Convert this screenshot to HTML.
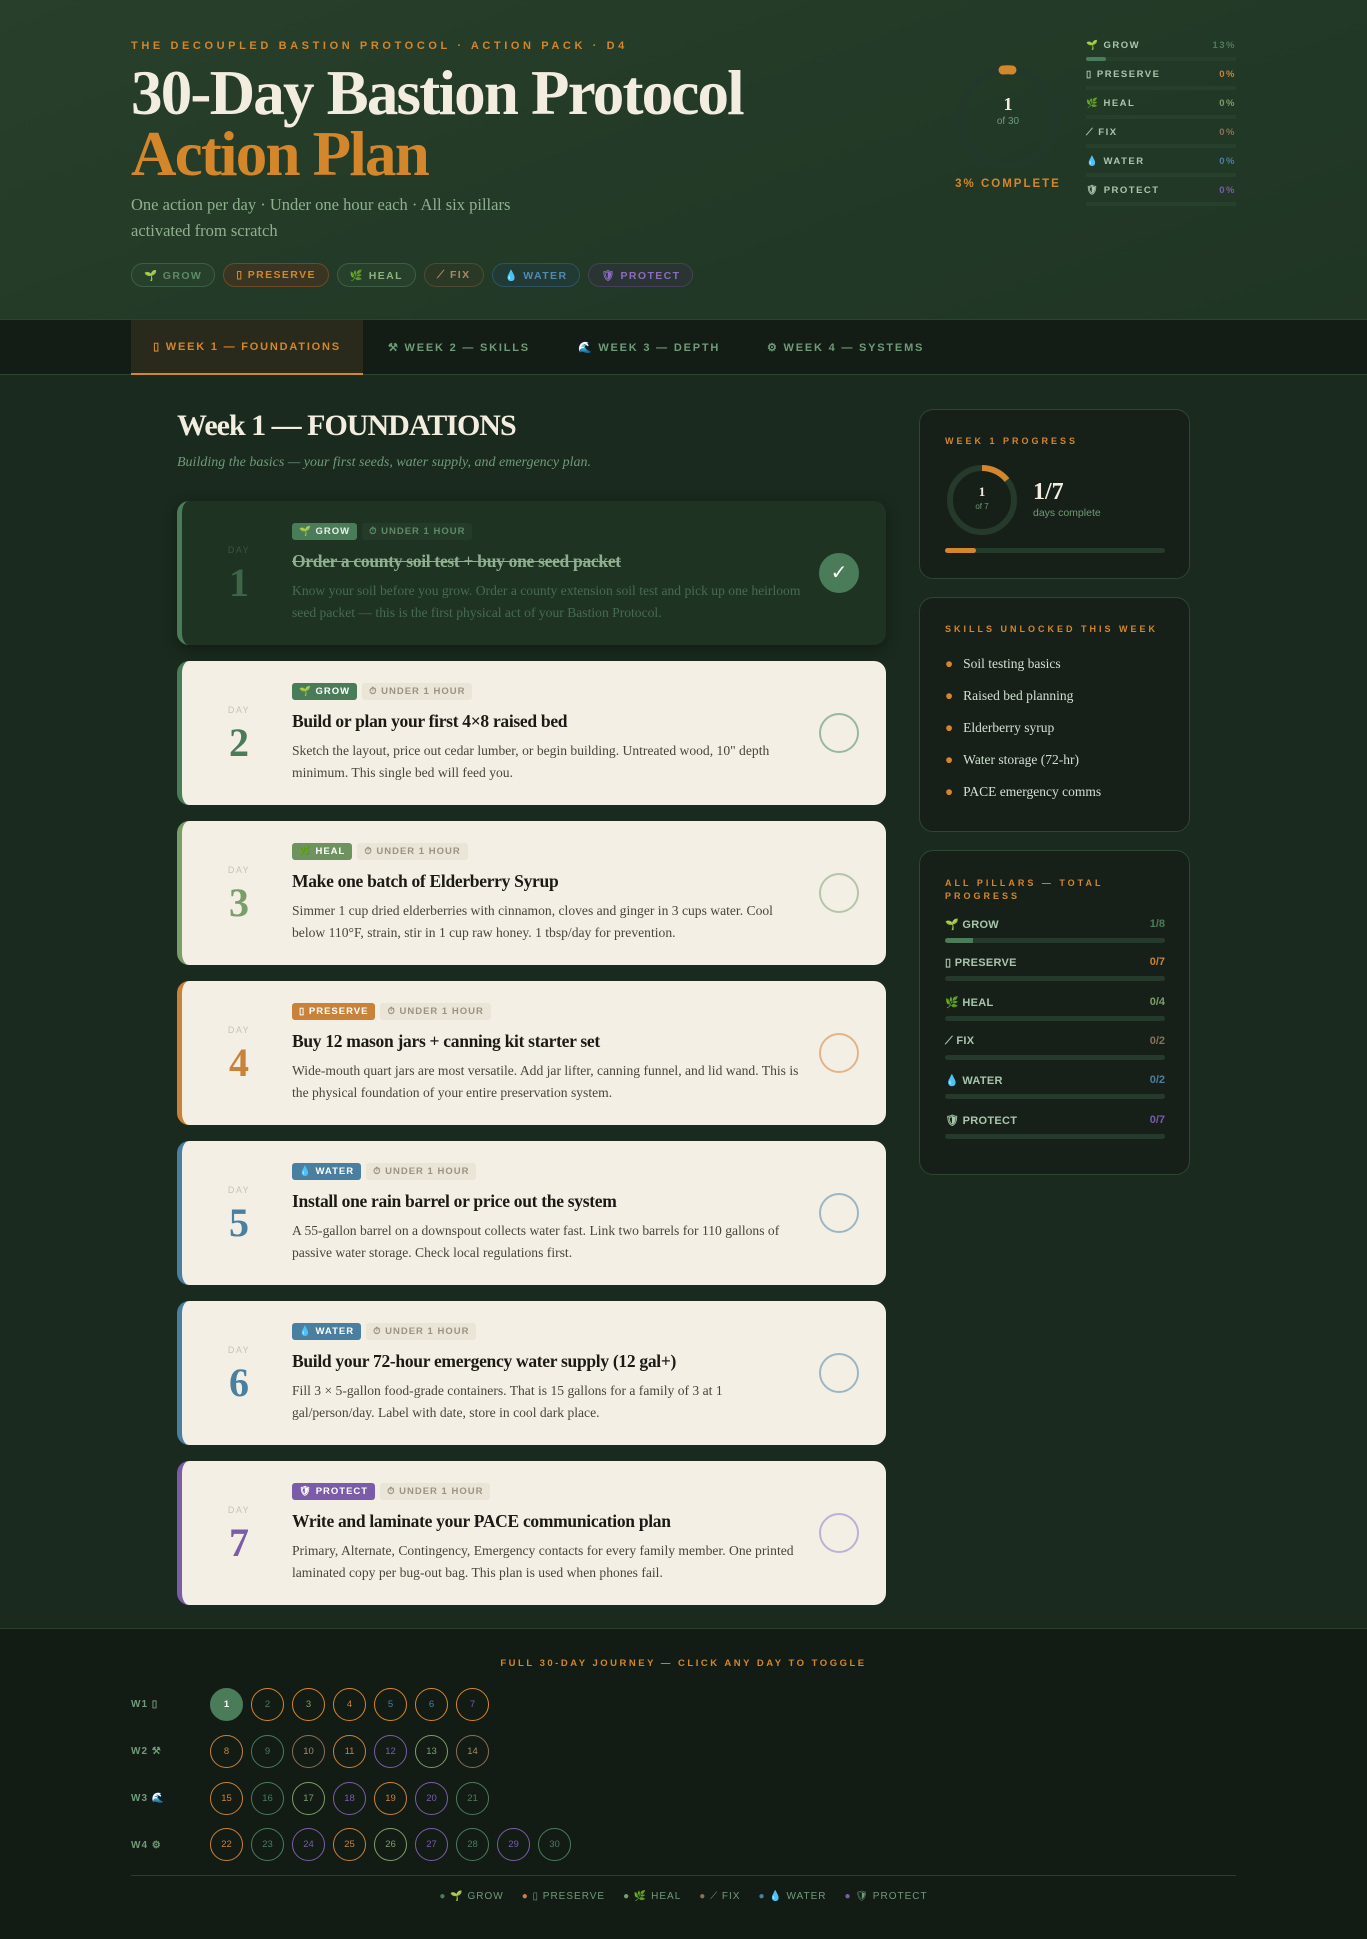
<!DOCTYPE html>
<html><head><meta charset="utf-8">
<style>
*{margin:0;padding:0;box-sizing:border-box}
body{width:1367px;height:1939px;background:#1a2a1e;font-family:"Liberation Sans",sans-serif;position:relative;overflow:hidden}
.abs{position:absolute}
.hdr{left:0;top:0;width:1367px;height:319px;background:linear-gradient(160deg,#273f2b,#203524)}
.eyebrow{left:131px;top:40px;font-size:11px;letter-spacing:3.6px;color:#d4862a;font-weight:bold}
.t1{left:131px;top:60px;font-family:"Liberation Serif",serif;font-weight:bold;font-size:63px;color:#f3ede0;letter-spacing:-1.8px;line-height:66px}
.t2{left:131px;top:121px;font-family:"Liberation Serif",serif;font-weight:bold;font-size:63px;color:#d4862a;letter-spacing:-1.8px;line-height:66px}
.sub{left:131px;top:192px;font-family:"Liberation Serif",serif;font-size:16.5px;color:#8fb08f;line-height:26px;width:420px}
.pills{left:131px;top:263px;display:flex;gap:8px}
.pill{height:24px;border-radius:12px;padding:0 12px;font-size:10.5px;letter-spacing:1.4px;font-weight:bold;display:flex;align-items:center;gap:5px;border:1px solid}
.nav{left:0;top:319px;width:1367px;height:56px;background:#141c16;border-top:1px solid #2c4430;border-bottom:1px solid #2c4430}
.tab{position:absolute;top:0;height:55px;display:flex;align-items:center;font-size:11px;letter-spacing:1.8px;font-weight:bold;color:#6f9a78;gap:10px}
.card{position:absolute;left:177px;width:709px;height:144px;border-radius:12px;background:#f4efe4;border-left:5px solid}
.day{position:absolute;left:42px;top:44px;width:30px;text-align:center;font-size:9px;letter-spacing:1.5px;color:#c9c2b3}
.dnum{position:absolute;left:32px;top:58px;width:50px;text-align:center;font-family:"Liberation Serif",serif;font-weight:bold;font-size:40px}
.tags{position:absolute;left:110px;top:22px;display:flex;gap:5px}
.tag{height:17px;padding:0 7px;border-radius:3px;font-size:9.5px;font-weight:bold;letter-spacing:1px;display:flex;align-items:center;gap:4px}
.tg2{background:#ebe5d8;color:#9a9385}
.ttl{position:absolute;left:110px;top:50px;font-family:"Liberation Serif",serif;font-weight:bold;font-size:17.5px;color:#1c1a16;letter-spacing:-.3px}
.desc{position:absolute;left:110px;top:79px;width:510px;font-family:"Liberation Serif",serif;font-size:13.6px;line-height:22px;color:#4a4538}
.chk{position:absolute;left:637px;top:52px;width:40px;height:40px;border-radius:50%;border:2px solid}
.side{position:absolute;left:919px;width:271px;border:1px solid #2e4632;border-radius:14px;background:#162019}
.sh{font-size:9px;letter-spacing:3px;font-weight:bold;color:#d4862a}
.prow{position:absolute;left:25px;width:220px}
.prow .l{font-size:11px;font-weight:bold;color:#a9c6ad;letter-spacing:.3px}
.prow .r{position:absolute;right:0;top:0;font-size:11px;font-weight:bold}
.bar{height:5px;border-radius:3px;background:#263a2b;margin-top:7px;position:relative;overflow:hidden}
.foot{left:0;top:1628px;width:1367px;height:311px;background:#131b15;border-top:1px solid #2a3d2d}
.c{position:absolute;width:33px;height:33px;border-radius:50%;border:1.5px solid;font-size:9.5px;display:flex;align-items:center;justify-content:center}
.rl{position:absolute;left:131px;font-size:10px;font-weight:bold;color:#6f9a78;letter-spacing:1px}
</style></head><body>

<div class="abs hdr"></div>
<div class="abs eyebrow">THE DECOUPLED BASTION PROTOCOL · ACTION PACK · D4</div>
<div class="abs t1">30-Day Bastion Protocol</div>
<div class="abs t2">Action Plan</div>
<div class="abs sub">One action per day · Under one hour each · All six pillars activated from scratch</div>
<div class="abs pills">
<div class="pill" style="color:#5e8a67;border-color:#3c5e44;background:#26402c">🌱 GROW</div>
<div class="pill" style="color:#d4862a;border-color:#6b4a26;background:#3a3522">▯ PRESERVE</div>
<div class="pill" style="color:#8db07e;border-color:#3c5e44;background:#26402c">🌿 HEAL</div>
<div class="pill" style="color:#a58a6a;border-color:#4e4a34;background:#2c3826">⟋ FIX</div>
<div class="pill" style="color:#4f8ab0;border-color:#2f5260;background:#223a34">💧 WATER</div>
<div class="pill" style="color:#8a6cc0;border-color:#44405a;background:#2a3432">🛡 PROTECT</div>
</div>

<svg class="abs" style="left:948px;top:58px" width="120" height="120"><circle cx="60" cy="60" r="48" fill="none" stroke="#23382a" stroke-width="7"/><path d="M55 12 A48 48 0 0 1 64 12" stroke="#d4862a" stroke-width="9" stroke-linecap="round" fill="none"/></svg>
<div class="abs" style="left:968px;top:94px;width:80px;text-align:center;font-family:'Liberation Serif',serif;font-weight:bold;font-size:18px;color:#f3ede0">1</div>
<div class="abs" style="left:968px;top:116px;width:80px;text-align:center;font-size:10px;color:#6f9a78">of 30</div>
<div class="abs" style="left:948px;top:178px;width:120px;text-align:center;font-size:11.5px;font-weight:bold;letter-spacing:2px;color:#d4862a">3% COMPLETE</div>

<div class="abs" style="left:1086px;top:40px;width:150px;font-size:9.5px;font-weight:bold;letter-spacing:1.5px;color:#a9c6ad">
<div style="position:relative;height:29px">🌱 GROW<span style="position:absolute;right:0;color:#4a7c59">13%</span><div style="position:absolute;left:0;right:0;top:17px;height:4px;background:#26402c;border-radius:2px"><div style="width:13%;height:4px;background:#4a7c59;border-radius:2px"></div></div></div>
<div style="position:relative;height:29px">▯ PRESERVE<span style="position:absolute;right:0;color:#c8823a">0%</span><div style="position:absolute;left:0;right:0;top:17px;height:4px;background:#26402c"></div></div>
<div style="position:relative;height:29px">🌿 HEAL<span style="position:absolute;right:0;color:#7a9e6a">0%</span><div style="position:absolute;left:0;right:0;top:17px;height:4px;background:#26402c"></div></div>
<div style="position:relative;height:29px">⟋ FIX<span style="position:absolute;right:0;color:#8a7055">0%</span><div style="position:absolute;left:0;right:0;top:17px;height:4px;background:#26402c"></div></div>
<div style="position:relative;height:29px">💧 WATER<span style="position:absolute;right:0;color:#4a7fa0">0%</span><div style="position:absolute;left:0;right:0;top:17px;height:4px;background:#26402c"></div></div>
<div style="position:relative;height:29px">🛡 PROTECT<span style="position:absolute;right:0;color:#7a5ca8">0%</span><div style="position:absolute;left:0;right:0;top:17px;height:4px;background:#26402c"></div></div>
</div>

<div class="abs nav">
<div class="tab" style="left:131px;width:232px;justify-content:center;background:#2a2a1c;color:#d4862a;border-bottom:2px solid #d4862a">▯ WEEK 1 — FOUNDATIONS</div>
<div class="tab" style="left:388px">⚒ WEEK 2 — SKILLS</div>
<div class="tab" style="left:578px">🌊 WEEK 3 — DEPTH</div>
<div class="tab" style="left:767px">⚙ WEEK 4 — SYSTEMS</div>
</div>

<div class="abs" style="left:177px;top:409px;font-family:'Liberation Serif',serif;font-weight:bold;font-size:30px;color:#f3ede0;letter-spacing:-1px">Week 1 — FOUNDATIONS</div>
<div class="abs" style="left:177px;top:455px;font-family:'Liberation Serif',serif;font-style:italic;font-size:14px;color:#6f9a78">Building the basics — your first seeds, water supply, and emergency plan.</div>

<div class="card" style="top:501px;background:#1e3322;border-color:#4a7c59;box-shadow:0 4px 14px rgba(0,0,0,.35)">
<div class="day" style="color:#3a5540">DAY</div><div class="dnum" style="color:#3e6548">1</div>
<div class="tags"><div class="tag" style="background:#4a7c59;color:#e9f0e5">🌱 GROW</div><div class="tag" style="background:#253b2a;color:#5e8a67">⏱ UNDER 1 HOUR</div></div>
<div class="ttl" style="color:#8fb08f;text-decoration:line-through">Order a county soil test + buy one seed packet</div>
<div class="desc" style="color:#476a50">Know your soil before you grow. Order a county extension soil test and pick up one heirloom seed packet — this is the first physical act of your Bastion Protocol.</div>
<div class="chk" style="background:#4a7c59;border-color:#4a7c59;color:#fff;font-size:20px;text-align:center;line-height:36px">✓</div>
</div>

<div class="card" style="top:661px;border-color:#4a7c59">
<div class="day">DAY</div><div class="dnum" style="color:#4a7c59">2</div>
<div class="tags"><div class="tag" style="background:#4a7c59;color:#fff">🌱 GROW</div><div class="tag tg2">⏱ UNDER 1 HOUR</div></div>
<div class="ttl">Build or plan your first 4×8 raised bed</div>
<div class="desc">Sketch the layout, price out cedar lumber, or begin building. Untreated wood, 10" depth minimum. This single bed will feed you.</div>
<div class="chk" style="border-color:#9ab8a0"></div></div>

<div class="card" style="top:821px;border-color:#7a9e6a">
<div class="day">DAY</div><div class="dnum" style="color:#7a9e6a">3</div>
<div class="tags"><div class="tag" style="background:#6e9360;color:#fff">🌿 HEAL</div><div class="tag tg2">⏱ UNDER 1 HOUR</div></div>
<div class="ttl">Make one batch of Elderberry Syrup</div>
<div class="desc">Simmer 1 cup dried elderberries with cinnamon, cloves and ginger in 3 cups water. Cool below 110°F, strain, stir in 1 cup raw honey. 1 tbsp/day for prevention.</div>
<div class="chk" style="border-color:#b5c6a8"></div></div>

<div class="card" style="top:981px;border-color:#c8823a">
<div class="day">DAY</div><div class="dnum" style="color:#c8823a">4</div>
<div class="tags"><div class="tag" style="background:#c8823a;color:#fff">▯ PRESERVE</div><div class="tag tg2">⏱ UNDER 1 HOUR</div></div>
<div class="ttl">Buy 12 mason jars + canning kit starter set</div>
<div class="desc">Wide-mouth quart jars are most versatile. Add jar lifter, canning funnel, and lid wand. This is the physical foundation of your entire preservation system.</div>
<div class="chk" style="border-color:#e0b58c"></div></div>

<div class="card" style="top:1141px;border-color:#4a7fa0">
<div class="day">DAY</div><div class="dnum" style="color:#4a7fa0">5</div>
<div class="tags"><div class="tag" style="background:#4a7fa0;color:#fff">💧 WATER</div><div class="tag tg2">⏱ UNDER 1 HOUR</div></div>
<div class="ttl">Install one rain barrel or price out the system</div>
<div class="desc">A 55-gallon barrel on a downspout collects water fast. Link two barrels for 110 gallons of passive water storage. Check local regulations first.</div>
<div class="chk" style="border-color:#9db6c4"></div></div>

<div class="card" style="top:1301px;border-color:#4a7fa0">
<div class="day">DAY</div><div class="dnum" style="color:#4a7fa0">6</div>
<div class="tags"><div class="tag" style="background:#4a7fa0;color:#fff">💧 WATER</div><div class="tag tg2">⏱ UNDER 1 HOUR</div></div>
<div class="ttl">Build your 72-hour emergency water supply (12 gal+)</div>
<div class="desc">Fill 3 × 5-gallon food-grade containers. That is 15 gallons for a family of 3 at 1 gal/person/day. Label with date, store in cool dark place.</div>
<div class="chk" style="border-color:#9db6c4"></div></div>

<div class="card" style="top:1461px;border-color:#7a5ca8">
<div class="day">DAY</div><div class="dnum" style="color:#7a5ca8">7</div>
<div class="tags"><div class="tag" style="background:#7a5ca8;color:#fff">🛡 PROTECT</div><div class="tag tg2">⏱ UNDER 1 HOUR</div></div>
<div class="ttl">Write and laminate your PACE communication plan</div>
<div class="desc">Primary, Alternate, Contingency, Emergency contacts for every family member. One printed laminated copy per bug-out bag. This plan is used when phones fail.</div>
<div class="chk" style="border-color:#bfb0d4"></div></div>

<div class="side" style="top:409px;height:170px">
<div class="sh" style="position:absolute;left:25px;top:26px">WEEK 1 PROGRESS</div>
<svg style="position:absolute;left:25px;top:53px" width="74" height="74"><circle cx="37" cy="37" r="32" fill="none" stroke="#253a2a" stroke-width="6"/><path d="M37 5 A32 32 0 0 1 62 17" stroke="#d4862a" stroke-width="6" fill="none"/></svg>
<div style="position:absolute;left:25px;top:74px;width:74px;text-align:center;font-family:'Liberation Serif',serif;font-weight:bold;font-size:13px;color:#f3ede0">1</div>
<div style="position:absolute;left:25px;top:92px;width:74px;text-align:center;font-size:8px;color:#6f9a78">of 7</div>
<div style="position:absolute;left:113px;top:69px;font-family:'Liberation Serif',serif;font-weight:bold;font-size:24px;color:#f3ede0">1/7</div>
<div style="position:absolute;left:113px;top:97px;font-size:10.5px;color:#6f9a78">days complete</div>
<div style="position:absolute;left:25px;top:138px;width:220px;height:5px;background:#263a2b;border-radius:3px"><div style="width:31px;height:5px;background:#d4862a;border-radius:3px"></div></div>
</div>

<div class="side" style="top:597px;height:235px">
<div class="sh" style="position:absolute;left:25px;top:26px">SKILLS UNLOCKED THIS WEEK</div>
<div style="position:absolute;left:25px;top:50px;font-family:'Liberation Serif',serif;font-size:13.5px;color:#cfe0cf;line-height:32px">
<div><span style="color:#d4862a;margin-right:10px">●</span>Soil testing basics</div>
<div><span style="color:#d4862a;margin-right:10px">●</span>Raised bed planning</div>
<div><span style="color:#d4862a;margin-right:10px">●</span>Elderberry syrup</div>
<div><span style="color:#d4862a;margin-right:10px">●</span>Water storage (72-hr)</div>
<div><span style="color:#d4862a;margin-right:10px">●</span>PACE emergency comms</div>
</div></div>

<div class="side" style="top:850px;height:325px">
<div class="sh" style="position:absolute;left:25px;top:26px;line-height:13px;width:180px">ALL PILLARS — TOTAL PROGRESS</div>
<div class="prow" style="top:67px"><div class="l">🌱 GROW</div><div class="r" style="color:#4a7c59">1/8</div><div class="bar"><div style="width:28px;height:5px;background:#4a7c59"></div></div></div>
<div class="prow" style="top:105px"><div class="l">▯ PRESERVE</div><div class="r" style="color:#c8823a">0/7</div><div class="bar"></div></div>
<div class="prow" style="top:145px"><div class="l">🌿 HEAL</div><div class="r" style="color:#7a9e6a">0/4</div><div class="bar"></div></div>
<div class="prow" style="top:184px"><div class="l">⟋ FIX</div><div class="r" style="color:#8a7055">0/2</div><div class="bar"></div></div>
<div class="prow" style="top:223px"><div class="l">💧 WATER</div><div class="r" style="color:#4a7fa0">0/2</div><div class="bar"></div></div>
<div class="prow" style="top:263px"><div class="l">🛡 PROTECT</div><div class="r" style="color:#7a5ca8">0/7</div><div class="bar"></div></div>
</div>

<div class="abs foot"></div>
<div class="abs" style="left:0;top:1658px;width:1367px;text-align:center;font-size:9.5px;letter-spacing:2.5px;font-weight:bold;color:#d4862a">FULL 30-DAY JOURNEY — CLICK ANY DAY TO TOGGLE</div>
<div class="rl" style="top:1699px">W1 ▯</div>
<div class="rl" style="top:1746px">W2 ⚒</div>
<div class="rl" style="top:1793px">W3 🌊</div>
<div class="rl" style="top:1840px">W4 ⚙</div>
<div class="abs" style="left:131px;top:1875px;width:1105px;height:1px;background:#2a3d2d"></div>
<div class="abs" style="left:0;top:1891px;width:1367px;display:flex;justify-content:center;gap:18px;font-size:10px;letter-spacing:1px;color:#6f9a78">
<span><span style="color:#4a7c59">●</span> 🌱 GROW</span><span><span style="color:#c8823a">●</span> ▯ PRESERVE</span><span><span style="color:#7a9e6a">●</span> 🌿 HEAL</span><span><span style="color:#8a7055">●</span> ⟋ FIX</span><span><span style="color:#4a7fa0">●</span> 💧 WATER</span><span><span style="color:#7a5ca8">●</span> 🛡 PROTECT</span></div>

<div class="c" style="left:210px;top:1688px;background:#4a7c59;border-color:#4a7c59;color:#fff;font-weight:bold">1</div>
<div class="c" style="left:251px;top:1688px;border-color:#d4862a;color:#4a7c59">2</div>
<div class="c" style="left:292px;top:1688px;border-color:#d4862a;color:#7a9e6a">3</div>
<div class="c" style="left:333px;top:1688px;border-color:#d4862a;color:#c8823a">4</div>
<div class="c" style="left:374px;top:1688px;border-color:#d4862a;color:#4a7fa0">5</div>
<div class="c" style="left:415px;top:1688px;border-color:#d4862a;color:#4a7fa0">6</div>
<div class="c" style="left:456px;top:1688px;border-color:#d4862a;color:#7a5ca8">7</div>

<div class="c" style="left:210px;top:1735px;border-color:#c8823a;color:#c8823a">8</div>
<div class="c" style="left:251px;top:1735px;border-color:#4a7c59;color:#4a7c59">9</div>
<div class="c" style="left:292px;top:1735px;border-color:#8a7055;color:#a58a6a">10</div>
<div class="c" style="left:333px;top:1735px;border-color:#c8823a;color:#c8823a">11</div>
<div class="c" style="left:374px;top:1735px;border-color:#7a5ca8;color:#7a5ca8">12</div>
<div class="c" style="left:415px;top:1735px;border-color:#7a9e6a;color:#7a9e6a">13</div>
<div class="c" style="left:456px;top:1735px;border-color:#8a7055;color:#a58a6a">14</div>

<div class="c" style="left:210px;top:1782px;border-color:#c8823a;color:#c8823a">15</div>
<div class="c" style="left:251px;top:1782px;border-color:#4a7c59;color:#4a7c59">16</div>
<div class="c" style="left:292px;top:1782px;border-color:#7a9e6a;color:#7a9e6a">17</div>
<div class="c" style="left:333px;top:1782px;border-color:#7a5ca8;color:#7a5ca8">18</div>
<div class="c" style="left:374px;top:1782px;border-color:#c8823a;color:#c8823a">19</div>
<div class="c" style="left:415px;top:1782px;border-color:#7a5ca8;color:#7a5ca8">20</div>
<div class="c" style="left:456px;top:1782px;border-color:#4a7c59;color:#4a7c59">21</div>

<div class="c" style="left:210px;top:1828px;border-color:#c8823a;color:#c8823a">22</div>
<div class="c" style="left:251px;top:1828px;border-color:#4a7c59;color:#4a7c59">23</div>
<div class="c" style="left:292px;top:1828px;border-color:#7a5ca8;color:#7a5ca8">24</div>
<div class="c" style="left:333px;top:1828px;border-color:#c8823a;color:#c8823a">25</div>
<div class="c" style="left:374px;top:1828px;border-color:#7a9e6a;color:#7a9e6a">26</div>
<div class="c" style="left:415px;top:1828px;border-color:#7a5ca8;color:#7a5ca8">27</div>
<div class="c" style="left:456px;top:1828px;border-color:#4a7c59;color:#4a7c59">28</div>
<div class="c" style="left:497px;top:1828px;border-color:#7a5ca8;color:#7a5ca8">29</div>
<div class="c" style="left:538px;top:1828px;border-color:#4a7c59;color:#4a7c59">30</div>
</body></html>
